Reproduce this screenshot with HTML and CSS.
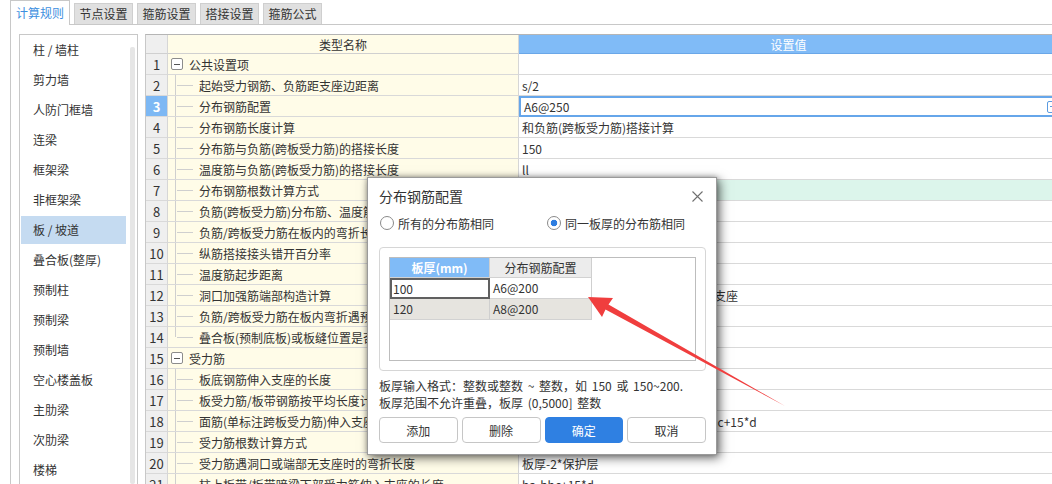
FILE: index.html
```html
<!DOCTYPE html>
<html lang="zh-CN">
<head>
<meta charset="utf-8">
<title>计算规则</title>
<link rel="stylesheet" href="styles.css">
</head>
<body>
<div class="app">
  <div class="tabs">
    <div class="tab active">计算规则</div>
    <div class="tab">节点设置</div>
    <div class="tab">箍筋设置</div>
    <div class="tab">搭接设置</div>
    <div class="tab">箍筋公式</div>
  </div>
  <div class="panel">
    <div class="list">
      <ul class="items">
        <li>柱 / 墙柱</li>
        <li>剪力墙</li>
        <li>人防门框墙</li>
        <li>连梁</li>
        <li>框架梁</li>
        <li>非框架梁</li>
        <li class="sel">板 / 坡道</li>
        <li>叠合板(整厚)</li>
        <li>预制柱</li>
        <li>预制梁</li>
        <li>预制墙</li>
        <li>空心楼盖板</li>
        <li>主肋梁</li>
        <li>次肋梁</li>
        <li>楼梯</li>
      </ul>
      <div class="scroll"></div>
    </div>
    <div class="grid">
      <div class="hd num"></div><div class="hd name">类型名称</div><div class="hd val">设置值</div>

      <div class="num">1</div><div class="name grp"><span class="toggle"></span>公共设置项</div><div class="val"></div>
      <div class="num">2</div><div class="name child">起始受力钢筋、负筋距支座边距离</div><div class="val">s/2</div>
      <div class="num sel">3</div><div class="name child">分布钢筋配置</div><div class="val sel"><span>A6@250</span><span class="cell-btn"></span></div>
      <div class="num">4</div><div class="name child">分布钢筋长度计算</div><div class="val">和负筋(跨板受力筋)搭接计算</div>
      <div class="num">5</div><div class="name child">分布筋与负筋(跨板受力筋)的搭接长度</div><div class="val">150</div>
      <div class="num">6</div><div class="name child">温度筋与负筋(跨板受力筋)的搭接长度</div><div class="val">ll</div>
      <div class="num">7</div><div class="name child">分布钢筋根数计算方式</div><div class="val green">向上取整+1</div>
      <div class="num">8</div><div class="name child">负筋(跨板受力筋)分布筋、温度筋是否带弯钩</div><div class="val">否</div>
      <div class="num">9</div><div class="name child">负筋/跨板受力筋在板内的弯折长度</div><div class="val">板厚-2*保护层</div>
      <div class="num">10</div><div class="name child">纵筋搭接接头错开百分率</div><div class="val">50%</div>
      <div class="num">11</div><div class="name child">温度筋起步距离</div><div class="val">s/2</div>
      <div class="num">12</div><div class="name child">洞口加强筋端部构造计算</div><div class="val">加强筋伸至洞口边缘后弯折锚入相邻支座</div>
      <div class="num">13</div><div class="name child">负筋/跨板受力筋在板内弯折遇预制板时的处理</div><div class="val">到支座边</div>
      <div class="num">14</div><div class="name child last">叠合板(预制底板)或板缝位置是否计算</div><div class="val">否</div>
      <div class="num">15</div><div class="name grp"><span class="toggle"></span>受力筋</div><div class="val"></div>
      <div class="num">16</div><div class="name child">板底钢筋伸入支座的长度</div><div class="val">max(ha/2,12*d)</div>
      <div class="num">17</div><div class="name child">板受力筋/板带钢筋按平均长度计算</div><div class="val">否</div>
      <div class="num">18</div><div class="name child">面筋(单标注跨板受力筋)伸入支座的锚固长度</div><div class="val">能直锚就直锚,否则按公式计算:ha-bhc+15*d</div>
      <div class="num">19</div><div class="name child">受力筋根数计算方式</div><div class="val">向上取整+1</div>
      <div class="num">20</div><div class="name child">受力筋遇洞口或端部无支座时的弯折长度</div><div class="val">板厚-2*保护层</div>
      <div class="num">21</div><div class="name child">柱上板带/板带暗梁下部受力筋伸入支座的长度</div><div class="val">ha-bhc+15*d</div>
    </div>
  </div>
</div>

<div class="dialog">
  <div class="dlg-title">
    <span>分布钢筋配置</span>
    <svg class="close" width="11" height="11" viewBox="0 0 11 11"><path d="M0.5 0.5 L10.5 10.5 M10.5 0.5 L0.5 10.5" stroke="#6f6f6f" stroke-width="1.1" fill="none"/></svg>
  </div>
  <div class="radios">
    <label class="radio"><span class="circle"></span>所有的分布筋相同</label>
    <label class="radio second"><span class="circle checked"></span>同一板厚的分布筋相同</label>
  </div>
  <div class="fieldbox">
    <div class="tbl-box">
      <div class="tbl">
        <div class="th blue">板厚(mm)</div><div class="th">分布钢筋配置</div>
        <div class="td focus">100</div><div class="td">A6@200</div>
        <div class="td alt">120</div><div class="td alt">A8@200</div>
      </div>
    </div>
  </div>
  <div class="hint">
    <div>板厚输入格式：整数或整数 ~ 整数，如 150 或 150~200.</div>
    <div>板厚范围不允许重叠，板厚 (0,5000] 整数</div>
  </div>
  <div class="buttons">
    <button class="btn">添加</button>
    <button class="btn">删除</button>
    <button class="btn primary">确定</button>
    <button class="btn">取消</button>
  </div>
</div>

<svg class="arrow" width="1052" height="484" viewBox="0 0 1052 484">
  <polygon points="588,297 613,298 608.5,304.4 785,406 605.5,309.6 602,317" fill="#f03e3e"/>
</svg>
</body>
</html>
```

FILE: styles.css
```css
* { box-sizing: border-box; }

html, body {
  margin: 0;
  padding: 0;
}

body {
  width: 1052px;
  height: 484px;
  overflow: hidden;
  position: relative;
  background: #ffffff;
  font-family: "Noto Sans CJK SC", "Microsoft YaHei", sans-serif;
  font-size: 12px;
  color: #333333;
}

.app {
  width: 1052px;
  height: 484px;
  display: flex;
  flex-direction: column;
}

/* ---------- tabs ---------- */
.tabs {
  display: flex;
  align-items: flex-end;
  gap: 4px;
  height: 24px;
  padding-left: 10px;
  flex: none;
}

.tab {
  width: 59px;
  height: 21px;
  border: 1px solid #cfcfcf;
  border-bottom: none;
  background: #e0e0e0;
  text-align: center;
  line-height: 20px;
  font-size: 12px;
  color: #333;
}

.tab.active {
  width: 60px;
  height: 25px;
  margin-bottom: -1px;
  background: #ffffff;
  color: #3d8fe0;
  line-height: 24px;
  border-color: #c8c8c8;
  position: relative;
  z-index: 1;
}

/* ---------- panel ---------- */
.panel {
  flex: 1;
  margin-left: 10px;
  border-left: 1px solid #c8c8c8;
  border-top: 1px solid #c8c8c8;
  padding: 9px 0 0 8px;
  display: flex;
  gap: 7px;
  overflow: hidden;
}

.list {
  width: 119px;
  flex: none;
  border: 1px solid #c8c8c8;
  border-bottom: none;
  padding-left: 1px;
  display: flex;
  background: #fff;
}

.items {
  list-style: none;
  margin: 0;
  padding: 0;
  width: 105px;
}

.items li {
  height: 30px;
  padding: 1px 0 1px 12px;
  background-clip: content-box;
  line-height: 28px;
  font-size: 12px;
  color: #333;
  white-space: nowrap;
}

.items li.sel {
  background-color: #c5dbf1;
  background-clip: border-box;
  box-shadow: inset 0 1px 0 #fff, inset 0 -1px 0 #fff;
}

.scroll {
  width: 5px;
  margin-left: 4px;
  margin-top: 12px;
  background: #e6e6e6;
  border-radius: 2px;
}

/* ---------- grid ---------- */
.grid {
  flex: none;
  align-self: flex-start;
  display: grid;
  grid-template-columns: 22px 351px 540px;
  grid-template-rows: 19px;
  grid-auto-rows: 21px;
  border-left: 1px solid #c8c8c8;
  border-top: 1px solid #b5b5b5;
}

.grid > div {
  border-right: 1px solid #d6d6d6;
  border-bottom: 1px solid #d9d9d9;
  white-space: nowrap;
  overflow: hidden;
  font-size: 12px;
  line-height: 21px;
}

.grid > .hd {
  background: #f0f0f0;
  text-align: center;
  line-height: 19px;
  color: #333;
  border-bottom-color: #d0d0d0;
}

.grid > .hd.val {
  background: #80bbf7;
  color: #ffffff;
  border-bottom-color: #6aa7e8;
  padding-left: 0;
}

.grid > .num {
  background: #efefef;
  text-align: center;
  font-size: 13px;
  color: #333;
}

.grid > .num.sel {
  background: #7db8f4;
  color: #ffffff;
  font-weight: bold;
}

.grid > .name {
  background: #fffce8;
  color: #333;
}

.grid > .name.grp {
  display: flex;
  align-items: center;
  gap: 6px;
  padding-left: 3px;
}

.toggle {
  width: 12px;
  height: 12px;
  border: 1px solid #8c8c8c;
  border-radius: 2px;
  background: linear-gradient(#555, #555) center / 6px 1px no-repeat, #ffffff;
  flex: none;
}

.grid > .name.child {
  padding-left: 31px;
  background:
    linear-gradient(#cfcfcf, #cfcfcf) 7px 0 / 1px 100% no-repeat,
    linear-gradient(#cfcfcf, #cfcfcf) 9px 50% / 16px 1px no-repeat,
    #fffce8;
}

.grid > .name.child.last {
  background:
    linear-gradient(#cfcfcf, #cfcfcf) 7px 0 / 1px 50% no-repeat,
    linear-gradient(#cfcfcf, #cfcfcf) 9px 50% / 16px 1px no-repeat,
    #fffce8;
}

.grid > .val {
  background: #ffffff;
  padding-left: 3px;
  color: #333;
}

.grid > .val.green {
  background: #dcf5eb;
}

.grid > .val.sel {
  border: 2px solid #66a6ea;
  padding-left: 3px;
  line-height: 17px;
  display: flex;
  align-items: center;
}

.cell-btn {
  width: 12px;
  height: 12px;
  margin-left: auto;
  margin-right: -2px;
  border: 1px solid #5b9be0;
  border-radius: 2px;
  background: linear-gradient(#5b9be0, #5b9be0) center / 6px 1px no-repeat, #fff;
}

/* ---------- dialog ---------- */
.dialog {
  position: absolute;
  left: 367px;
  top: 177px;
  width: 350px;
  height: 278px;
  padding: 0 10px 11px 11px;
  background: #ffffff;
  border: 1px solid #9a9a9a;
  box-shadow: 3px 3px 10px rgba(0, 0, 0, 0.55), 0 0 5px rgba(0, 0, 0, 0.3);
  z-index: 10;
  display: flex;
  flex-direction: column;
}

.dlg-title {
  height: 37px;
  display: flex;
  align-items: center;
  justify-content: space-between;
  font-size: 14px;
  color: #333;
  padding-right: 3px;
}

.radios {
  height: 18px;
  display: flex;
  align-items: center;
  margin-bottom: 15px;
  font-size: 12px;
}

.radio {
  display: flex;
  align-items: center;
  gap: 4px;
  margin-left: 1px;
}

.radio.second {
  margin-left: 53px;
}

.circle {
  width: 14px;
  height: 14px;
  border: 1px solid #8a8a8a;
  border-radius: 50%;
  background: #fff;
}

.circle.checked {
  background: radial-gradient(circle, #2d7de0 0 3px, #ffffff 3.6px);
}

.fieldbox {
  height: 124px;
  border: 1px solid #d6d6d6;
  border-radius: 4px;
  padding: 9px;
}

.tbl-box {
  height: 104px;
  border: 1px solid #bdbdbd;
  background: #fff;
}

.tbl {
  display: grid;
  grid-template-columns: 100px 102px;
  grid-template-rows: 20px 21px 21px;
}

.tbl > div {
  border-right: 1px solid #cfcfcf;
  border-bottom: 1px solid #d2d2d2;
  font-size: 12px;
  line-height: 19px;
  white-space: nowrap;
}

.tbl .th {
  background: #ececec;
  text-align: center;
  color: #333;
}

.tbl .th.blue {
  background: #80bbf7;
  color: #fff;
  font-weight: bold;
}

.tbl .td {
  padding-left: 3px;
  background: #fff;
  color: #333;
  line-height: 20px;
}

.tbl .td.focus {
  border: 2px solid #606060;
  padding-left: 1px;
  line-height: 17px;
}

.tbl .td.alt {
  background: #e6e4df;
}

.hint {
  margin-top: 6px;
  font-size: 12px;
  line-height: 17px;
  color: #333;
  white-space: nowrap;
  word-spacing: 2px;
}

.buttons {
  margin-top: 6px;
  display: flex;
  gap: 4px;
}

.btn {
  flex: 1;
  height: 26px;
  border: 1px solid #c6c6c6;
  border-radius: 4px;
  background: #ffffff;
  font-family: inherit;
  font-size: 12px;
  color: #333;
  padding: 0;
}

.btn.primary {
  background: #2f80e2;
  border-color: #2f80e2;
  color: #ffffff;
}

/* ---------- arrow overlay ---------- */
.arrow {
  position: absolute;
  left: 0;
  top: 0;
  z-index: 11;
  pointer-events: none;
}
```
